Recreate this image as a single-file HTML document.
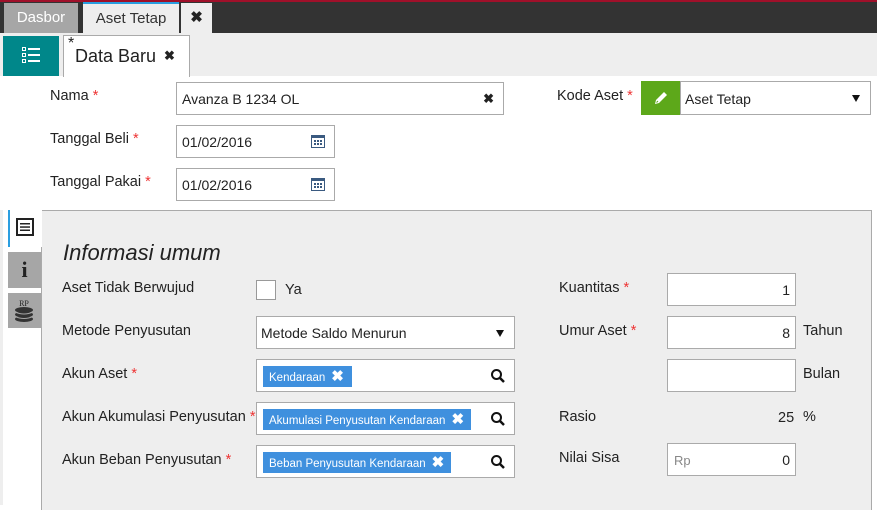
<!DOCTYPE html><html><head><style>
*{box-sizing:border-box;margin:0;padding:0}
body{width:877px;height:505px;overflow:hidden;background:#fff;font-family:"Liberation Sans",sans-serif;font-size:14px;color:#222;position:relative}
.a{position:absolute}
.lbl{position:absolute;font-size:14.5px;color:#222;white-space:nowrap}
.req{color:#e33}
.in{position:absolute;background:#fff;border:1px solid #aaa;height:33px}
.tag{position:absolute;top:6px;left:6px;height:21px;background:#3f90de;color:#fff;font-size:11.5px;line-height:21px;padding:0 6px;white-space:nowrap}
.tag b{font-size:15px;margin-left:6px}
.srch{position:absolute;right:8px;top:8px}
.num{position:absolute;right:5px;top:8px;font-size:14px}
.arr{position:absolute;right:10px;top:11px;width:0;height:0;border-left:4px solid transparent;border-right:4px solid transparent;border-top:7px solid #111}
</style></head><body>
<div class="a" style="left:0;top:0;width:877px;height:33px;background:#333"></div>
<div class="a" style="left:0;top:0;width:877px;height:2px;background:#a0102a"></div>
<div class="a" style="left:4px;top:3px;width:74px;height:30px;background:#a6a6a6;color:#fff;font-size:15px;line-height:30px;text-align:center">Dasbor</div>
<div class="a" style="left:83px;top:2px;width:96px;height:31px;background:#eee;border-top:2px solid #2a9ee0;color:#333;font-size:15px;line-height:29px;text-align:center">Aset Tetap</div>
<div class="a" style="left:181px;top:3px;width:31px;height:30px;background:#eee;font-size:15px;font-weight:bold;line-height:30px;text-align:center;color:#222">✖</div>
<div class="a" style="left:0;top:33px;width:877px;height:43px;background:#eee"></div>
<div class="a" style="left:3px;top:36px;width:56px;height:40px;background:#00878a"></div>
<svg class="a" style="left:22px;top:46px" width="18" height="18"><g fill="#fff"><rect x="0" y="1" width="4" height="4"/><rect x="6" y="2" width="12" height="2"/><rect x="0" y="7" width="4" height="4"/><rect x="6" y="8" width="12" height="2"/><rect x="0" y="13" width="4" height="4"/><rect x="6" y="14" width="12" height="2"/></g><g fill="#00878a"><rect x="1" y="2" width="2" height="2"/><rect x="1" y="8" width="2" height="2"/><rect x="1" y="14" width="2" height="2"/></g></svg>
<div class="a" style="left:63px;top:35px;width:127px;height:42px;background:#fff;border:1px solid #aaa;border-bottom:none"></div>
<div class="a" style="left:68px;top:35px;font-size:16px">*</div>
<div class="a" style="left:75px;top:46px;font-size:18px;color:#222">Data Baru</div>
<div class="a" style="left:164px;top:48px;font-size:13px;font-weight:bold">✖</div>

<div class="lbl" style="left:50px;top:88px">Nama <span class="req">*</span></div>
<div class="in" style="left:176px;top:82px;width:328px;height:33px"><span class="a" style="left:5px;top:8px;font-size:14px">Avanza B 1234 OL</span><span class="a" style="right:9px;top:8px;font-size:13px;font-weight:bold">✖</span></div>
<div class="lbl" style="left:50px;top:131px">Tanggal Beli <span class="req">*</span></div>
<div class="in" style="left:176px;top:125px;width:159px"><span class="a" style="left:5px;top:8px">01/02/2016</span><svg class="a" style="left:134px;top:8px" width="14" height="14"><rect x="0.5" y="1.5" width="13" height="12" fill="#fff" stroke="#3a5a80"/><rect x="0" y="1" width="14" height="3" fill="#3a5a80"/><g fill="#3a5a80"><rect x="3" y="6" width="2" height="2"/><rect x="6" y="6" width="2" height="2"/><rect x="9" y="6" width="2" height="2"/><rect x="3" y="9" width="2" height="2"/><rect x="6" y="9" width="2" height="2"/><rect x="9" y="9" width="2" height="2"/></g></svg></div>
<div class="lbl" style="left:50px;top:174px">Tanggal Pakai <span class="req">*</span></div>
<div class="in" style="left:176px;top:168px;width:159px"><span class="a" style="left:5px;top:8px">01/02/2016</span><svg class="a" style="left:134px;top:8px" width="14" height="14"><rect x="0.5" y="1.5" width="13" height="12" fill="#fff" stroke="#3a5a80"/><rect x="0" y="1" width="14" height="3" fill="#3a5a80"/><g fill="#3a5a80"><rect x="3" y="6" width="2" height="2"/><rect x="6" y="6" width="2" height="2"/><rect x="9" y="6" width="2" height="2"/><rect x="3" y="9" width="2" height="2"/><rect x="6" y="9" width="2" height="2"/><rect x="9" y="9" width="2" height="2"/></g></svg></div>

<div class="lbl" style="left:557px;top:88px">Kode Aset <span class="req">*</span></div>
<div class="a" style="left:641px;top:81px;width:40px;height:34px;background:#5da81a"></div>
<svg class="a" style="left:653px;top:90px" width="16" height="16"><path d="M2 14 L3 10 L11 2 L14 5 L6 13 Z" fill="#fff"/><path d="M3.5 12.5 L5 11" stroke="#5da81a"/></svg>
<div class="in" style="left:680px;top:81px;width:191px;height:34px"><span class="a" style="left:4px;top:9px">Aset Tetap</span><span class="arr" style="top:13px"></span></div>

<div class="a" style="left:41px;top:210px;width:831px;height:300px;background:#eee;border:1px solid #aaa;border-bottom:none"></div>
<div class="a" style="left:0;top:210px;width:3px;height:295px;background:#eee"></div>
<div class="a" style="left:8px;top:210px;width:34px;height:37px;background:#fff;border-left:2px solid #2a9ee0"></div>
<svg class="a" style="left:16px;top:218px" width="18" height="18"><rect x="1" y="1" width="16" height="16" fill="none" stroke="#222" stroke-width="2"/><g fill="#222"><rect x="4" y="5" width="10" height="1.5"/><rect x="4" y="8.3" width="10" height="1.5"/><rect x="4" y="11.5" width="10" height="1.5"/></g></svg>
<div class="a" style="left:8px;top:252px;width:33px;height:36px;background:#a6a6a6;color:#222;font-family:'Liberation Serif',serif;font-size:22px;font-weight:bold;text-align:center;line-height:36px">i</div>
<div class="a" style="left:8px;top:293px;width:33px;height:35px;background:#a6a6a6"></div>
<svg class="a" style="left:13px;top:297px" width="22" height="28"><text x="11" y="9" text-anchor="middle" font-size="8" font-family="Liberation Serif" fill="#222">RP</text><g fill="#333"><ellipse cx="11" cy="13" rx="9" ry="3"/><ellipse cx="11" cy="17.5" rx="9" ry="3"/><ellipse cx="11" cy="22" rx="9" ry="3"/></g><g stroke="#a6a6a6" fill="none"><path d="M2 15 Q11 19 20 15"/><path d="M2 19.5 Q11 23.5 20 19.5"/></g></svg>

<div class="a" style="left:63px;top:240px;font-size:22px;font-style:italic;color:#222">Informasi umum</div>
<div class="lbl" style="left:62px;top:280px">Aset Tidak Berwujud</div>
<div class="a" style="left:256px;top:280px;width:20px;height:20px;background:#fff;border:1px solid #999"></div>
<div class="lbl" style="left:285px;top:282px">Ya</div>
<div class="lbl" style="left:62px;top:323px">Metode Penyusutan</div>
<div class="in" style="left:256px;top:316px;width:259px"><span class="a" style="left:4px;top:8px">Metode Saldo Menurun</span><span class="arr" style="top:13px"></span></div>
<div class="lbl" style="left:62px;top:366px">Akun Aset <span class="req">*</span></div>
<div class="in" style="left:256px;top:359px;width:259px"><span class="tag" style="width:89px">Kendaraan<b>✖</b></span><svg class="srch" width="16" height="16"><circle cx="6.5" cy="6.5" r="4.5" fill="none" stroke="#111" stroke-width="2"/><path d="M10 10 L14 14" stroke="#111" stroke-width="2.5"/></svg></div>
<div class="lbl" style="left:62px;top:409px">Akun Akumulasi Penyusutan <span class="req">*</span></div>
<div class="in" style="left:256px;top:402px;width:259px"><span class="tag" style="width:208px">Akumulasi Penyusutan Kendaraan<b>✖</b></span><svg class="srch" width="16" height="16"><circle cx="6.5" cy="6.5" r="4.5" fill="none" stroke="#111" stroke-width="2"/><path d="M10 10 L14 14" stroke="#111" stroke-width="2.5"/></svg></div>
<div class="lbl" style="left:62px;top:452px">Akun Beban Penyusutan <span class="req">*</span></div>
<div class="in" style="left:256px;top:445px;width:259px"><span class="tag" style="width:188px">Beban Penyusutan Kendaraan<b>✖</b></span><svg class="srch" width="16" height="16"><circle cx="6.5" cy="6.5" r="4.5" fill="none" stroke="#111" stroke-width="2"/><path d="M10 10 L14 14" stroke="#111" stroke-width="2.5"/></svg></div>

<div class="lbl" style="left:559px;top:280px">Kuantitas <span class="req">*</span></div>
<div class="in" style="left:667px;top:273px;width:129px"><span class="num">1</span></div>
<div class="lbl" style="left:559px;top:323px">Umur Aset <span class="req">*</span></div>
<div class="in" style="left:667px;top:316px;width:129px"><span class="num">8</span></div>
<div class="lbl" style="left:803px;top:323px">Tahun</div>
<div class="in" style="left:667px;top:359px;width:129px"></div>
<div class="lbl" style="left:803px;top:366px">Bulan</div>
<div class="lbl" style="left:559px;top:409px">Rasio</div>
<div class="lbl" style="left:778px;top:410px">25</div>
<div class="lbl" style="left:803px;top:409px">%</div>
<div class="lbl" style="left:559px;top:450px">Nilai Sisa</div>
<div class="in" style="left:667px;top:443px;width:129px"><span class="a" style="left:6px;top:9px;color:#888;font-size:13px">Rp</span><span class="num">0</span></div>
</body></html>
